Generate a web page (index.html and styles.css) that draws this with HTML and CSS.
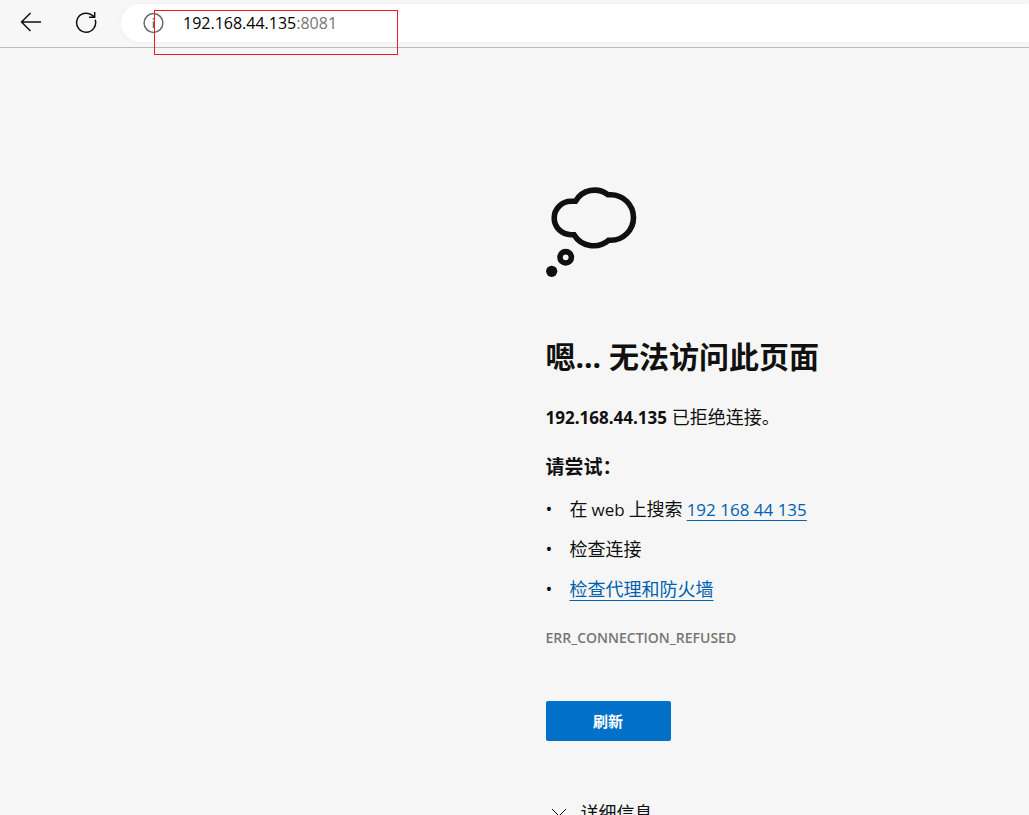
FILE: index.html
```html
<!DOCTYPE html>
<html lang="zh-CN">
<head>
    <meta charset="UTF-8">
    <title>192.168.44.135</title>
    <link rel="stylesheet" href="styles.css">
</head>
<body>
    <header class="toolbar">
        <button type="button" class="nav-button" aria-label="返回">
            <svg width="22" height="22" viewBox="0 0 22 22">
                <path d="M21 11H1.5M10.5 2L1.5 11L10.5 20"/>
            </svg>
        </button>
        <button type="button" class="nav-button" aria-label="重新加载">
            <svg width="22" height="22" viewBox="0 0 22 22">
                <path d="M20.2 8.8A9.5 9.5 0 1 1 17 4.2L19.5 6.2M19.7 1V6.2H14"/>
            </svg>
        </button>
        <div class="address">
            <svg class="info" width="22" height="22" viewBox="0 0 22 22">
                <circle cx="10.5" cy="11" r="9.4"/>
                <path d="M10.5 9.5V16M10.5 6V7.6"/>
            </svg>
            <span class="url">192.168.44.135<span class="port">:8081</span></span>
            <div class="highlight"></div>
        </div>
    </header>

    <main class="error-page">
        <svg class="cloud" width="92" height="92" viewBox="0 0 92 92">
            <path d="M29.5 14.3H25A16.8 16.7 0 0 0 25 47.7H28A23 23 0 0 0 62.5 53.3H64.7A22.8 22.8 0 0 0 64.7 7.7H62A22 22 0 0 0 29.5 14.3Z"/>
            <circle cx="19.7" cy="70.3" r="5.7"/>
            <circle class="dot" cx="5.7" cy="84.3" r="5.6"/>
        </svg>
        <h1>嗯... 无法访问此页面</h1>
        <p class="summary"><strong>192.168.44.135</strong> 已拒绝连接。</p>
        <h2>请尝试：</h2>
        <ul class="suggestions">
            <li>在 <span class="latin">web</span> 上搜索 <a class="latin" href="#">192 168 44 135</a></li>
            <li>检查连接</li>
            <li><a href="#">检查代理和防火墙</a></li>
        </ul>
        <p class="error-code">ERR_CONNECTION_REFUSED</p>
        <button type="button" class="refresh">刷新</button>
        <button type="button" class="details">
            <svg width="16" height="10" viewBox="0 0 16 10">
                <path d="M1 1L8 8L15 1"/>
            </svg>
            详细信息
        </button>
    </main>
</body>
</html>
```

FILE: styles.css
```css
* {
    box-sizing: border-box;
}
body {
    margin: 0;
    height: 100vh;
    overflow: hidden;
    background-color: #f6f6f6;
    color: #101010;
    font-family: "Open Sans", "Noto Sans CJK SC", sans-serif;
    font-size: 18px;
}
button {
    border: none;
    padding: 0;
    background: none;
    color: inherit;
    font-family: inherit;
    cursor: pointer;
}
svg {
    fill: none;
    stroke: #101010;
}

/* browser toolbar */
.toolbar {
    display: flex;
    height: 48px;
    padding: 4px 0 5px 20px;
    background-color: #f7f7f7;
    border-bottom: 1px solid #bcbcbc;
}
.nav-button {
    display: flex;
    align-items: center;
    width: 22px;
    margin-right: 33px;
    padding-bottom: 2px;
}
.nav-button svg {
    stroke-width: 1.5;
}
.address {
    position: relative;
    flex: 1;
    display: flex;
    align-items: center;
    margin-left: -9px;
    padding-left: 22px;
    background-color: #fff;
    border-radius: 19px 0 0 19px;
    box-shadow: 0 0 4px #ececec;
}
.info {
    stroke: #6b6b6b;
    stroke-width: 1.5;
}
.url {
    margin-left: 18px;
    font-size: 16px;
    line-height: 38px;
    color: #000;
}
.port {
    color: #767676;
}
.highlight {
    position: absolute;
    top: 6px;
    left: 33px;
    width: 244px;
    height: 45px;
    border: 1px solid #ed1c24;
}

/* error page */
.error-page {
    display: flex;
    flex-direction: column;
    align-items: flex-start;
    margin-left: calc(50% + 31px);
    padding-top: 139px;
}
.cloud {
    stroke-width: 5.6;
}
.dot {
    fill: #101010;
    stroke: none;
}
h1 {
    margin: 56px 0 0;
    font-size: 30px;
    line-height: 44px;
}
.summary {
    margin: 25px 0 0;
    line-height: 26px;
}
.summary strong,
.latin {
    font-size: 17px;
}
h2 {
    margin: 22px 0 0;
    font-size: 19px;
    line-height: 28px;
}
.suggestions {
    margin: 8px 0 0;
    padding: 0;
    list-style: none;
}
.suggestions li {
    display: flex;
    align-items: baseline;
    gap: 4px;
    height: 40px;
    line-height: 40px;
}
.suggestions li::before {
    content: "•";
    width: 20px;
    font-size: 18px;
}
a {
    color: #0061b0;
    text-decoration: underline;
    text-decoration-thickness: 1px;
    text-decoration-skip-ink: none;
    text-underline-offset: 4px;
}
.error-code {
    margin: 19px 0 0;
    color: #767676;
    font-size: 14px;
    font-weight: 600;
    line-height: 20px;
}
.refresh {
    width: 125px;
    height: 40px;
    margin-top: 53px;
    padding-bottom: 2px;
    background-color: #0070c8;
    border-radius: 2px;
    color: #fff;
    font-size: 15px;
    font-weight: bold;
}
.details {
    display: flex;
    align-items: center;
    gap: 14px;
    margin: 59px 0 0 5px;
    font-size: 18px;
    line-height: 26px;
}
```
